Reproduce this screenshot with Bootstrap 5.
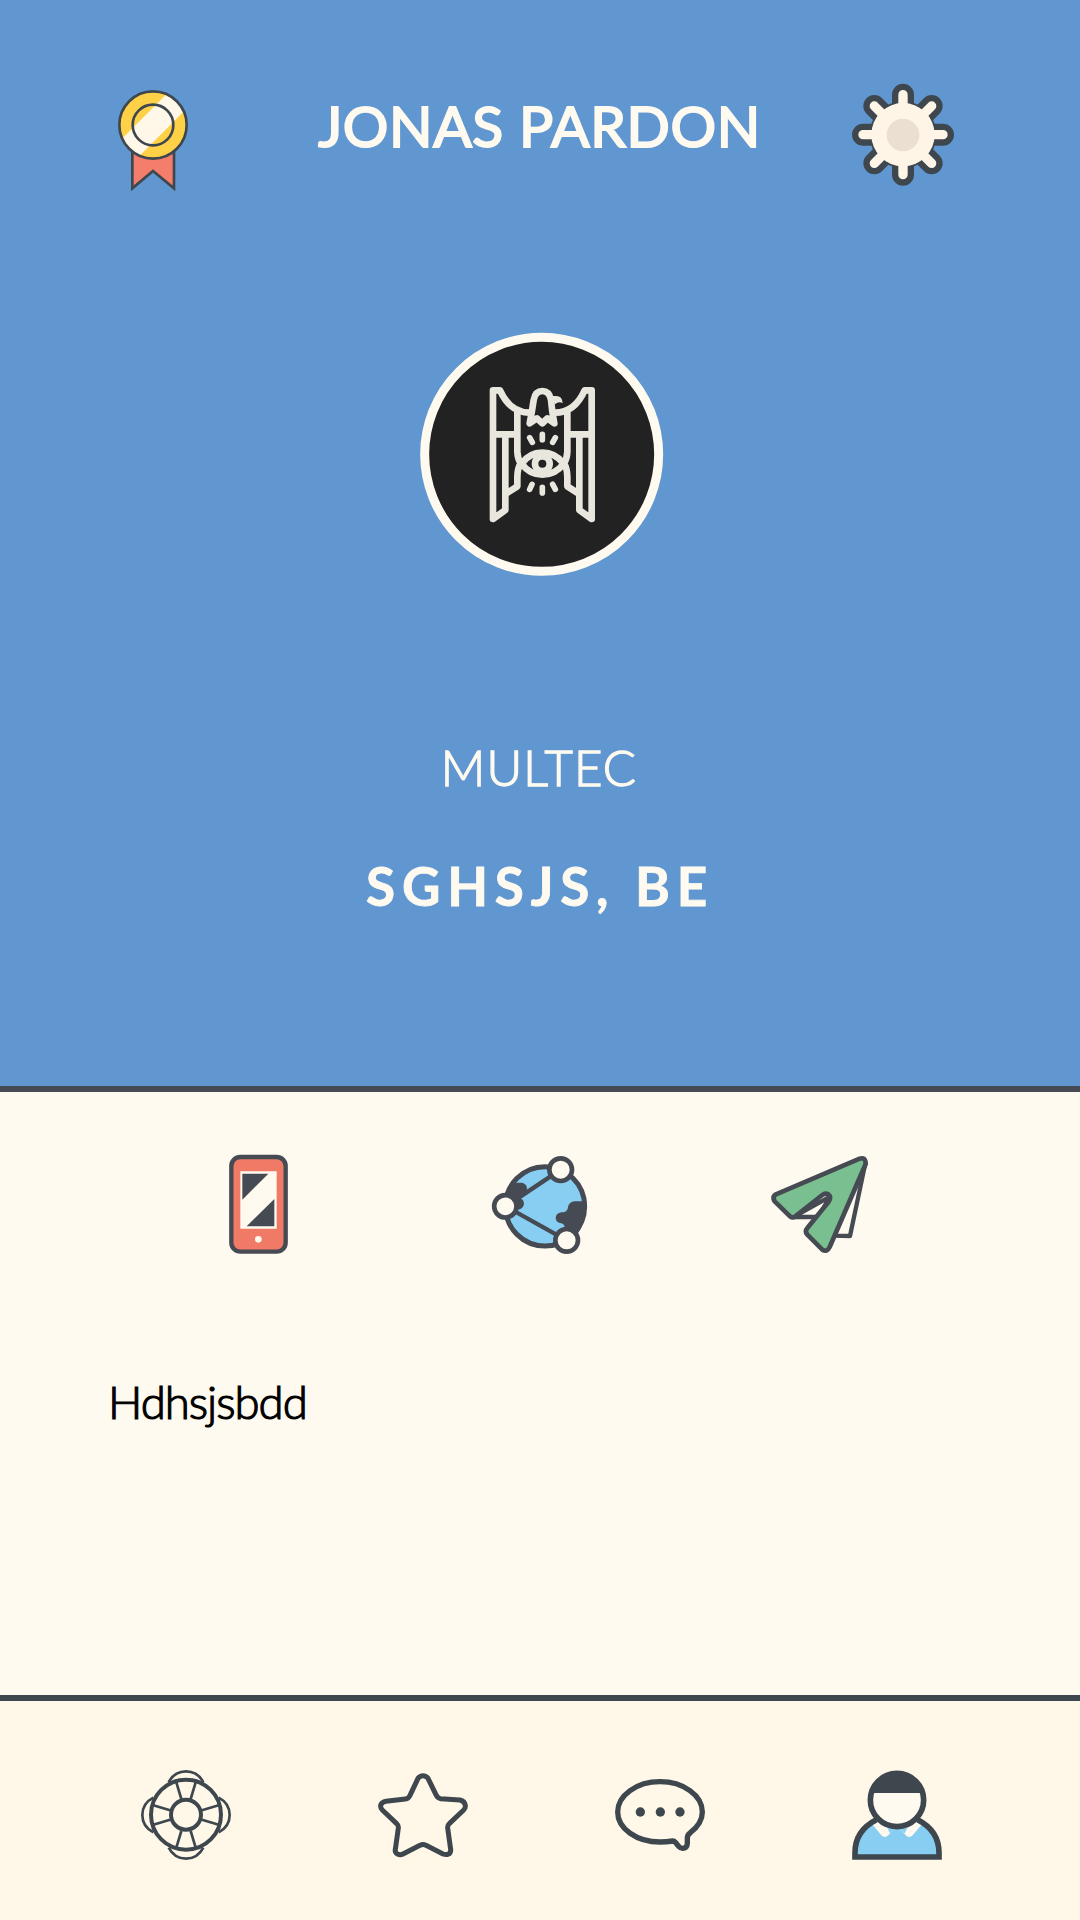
<!DOCTYPE html>
<html lang="en">
<head>
<meta charset="utf-8">
<meta name="viewport" content="width=device-width, initial-scale=1">
<title>Jonas Pardon</title>
<link href="https://cdn.jsdelivr.net/npm/bootstrap@5.3.0/dist/css/bootstrap.min.css" rel="stylesheet">
<style>
  body { font-family: Lato, "Open Sans", sans-serif; background: #fffaf0; color: #000; }
  svg { display: block; flex: none; }
  .screen { width: 1080px; height: 1920px; }
  .profile { height: 1092px; background: #6197d0; color: #fffaf0; border-bottom: 6px solid #464a52; }
  .topbar { padding: 70px 110px 0 100px; }
  .person { font-size: 57px; line-height: 60px; font-weight: 400; letter-spacing: .6px; -webkit-text-stroke: 2px; margin: 25px 0 0 29px; }
  .avatar { margin: 122px 0 0 410px; }
  .study { font-size: 49px; line-height: 60px; font-weight: 300; letter-spacing: 1.2px; -webkit-text-stroke: 1.4px; margin: 151px 2px 0 0; }
  .place { font-size: 53px; line-height: 60px; font-weight: 700; letter-spacing: 6.8px; -webkit-text-stroke: .8px; margin-top: 59px; }
  .about { height: 603px; }
  .links { padding: 48px 200px 0 210px; }
  .bio { font-size: 45.5px; line-height: 60px; font-weight: 300; letter-spacing: -1px; -webkit-text-stroke: 1.2px; margin: 102px 0 0 108px; }
  .tabs { height: 225px; background: #fff7e8; border-top: 6px solid #3f474e; padding: 66px 65px 0 67px; }
</style>
</head>
<body>
<main class="screen d-flex flex-column overflow-hidden">
  <section class="profile">
    <header class="topbar d-flex align-items-start justify-content-between">
      <svg width="110" height="130" viewBox="0 0 330 390" role="img" aria-label="Awards">
        <defs><clipPath id="disc"><circle cx="159" cy="165" r="101"/></clipPath></defs>
        <path d="M97 240V355L159 303L222 355V240Z" fill="#f47d6b" stroke="#3f474e" stroke-width="8"/>
        <circle cx="159" cy="165" r="101" fill="#ffd147"/>
        <path d="M55 217L209 63L264 112L110 266Z" fill="#fff7e8" clip-path="url(#disc)"/>
        <g fill="none" stroke="#3f474e" stroke-width="8"><circle cx="159" cy="165" r="101"/><circle cx="159" cy="165" r="61"/></g>
      </svg>
      <h1 class="person text-nowrap">JONAS PARDON</h1>
      <svg width="130" height="130" viewBox="0 0 390 390" role="img" aria-label="Settings">
        <g stroke-linecap="round">
          <g fill="#3f474e" stroke="#3f474e" stroke-width="66"><circle cx="189" cy="194" r="80" stroke-width="40"/><path d="M189 74V314M69 194H309M103 108L275 280M275 108L103 280"/></g>
          <g fill="#fff5e6" stroke="#fff5e6" stroke-width="28"><circle cx="189" cy="194" r="95" stroke="none"/><path d="M189 74V314M69 194H309M103 108L275 280M275 108L103 280"/></g>
        </g>
        <circle cx="189" cy="195" r="49" fill="#eadfd1"/>
      </svg>
    </header>
    <svg class="avatar" width="264" height="264" viewBox="0 0 792 792" role="img" aria-label="Profile picture">
      <circle cx="395" cy="397" r="351" fill="#222" stroke="#fffaf0" stroke-width="27"/>
      <g fill="none" stroke="#e9e6de" stroke-width="20" stroke-linejoin="round" stroke-linecap="round">
        <g id="wing">
          <path d="M249 205H270Q300 272 359 272M249 205V591L286 564V340M249 337H321M322 268V390Q323 410 332 424Q322 440 322 465V493L288 515"/>
        </g>
        <use href="#wing" transform="matrix(-1 0 0 1 794 0)"/>
        <path d="M359 304Q366 270 371 234Q376 207 397 207Q418 207 423 234Q426 270 433 304L412 289L397 304L381 289Z"/>
        <path d="M335 425Q358 392 397 392Q436 392 461 425Q436 458 397 458Q358 458 335 425Z"/>
        <circle cx="397" cy="425" r="22"/>
        <path d="M397 337V353M359 347L367 361M436 347L428 361M397 496V513M366 487L359 502M428 487L436 502" stroke-width="17"/>
      </g>
      <path d="M424 222H439Q457 222 458 244Q447 236 435 247Z" fill="#e9e6de"/>
    </svg>
    <p class="study text-center">MULTEC</p>
    <p class="place mb-0 text-center">SGHSJS, BE</p>
  </section>

  <section class="about">
    <div class="links d-flex justify-content-between">
      <svg width="100" height="130" viewBox="0 0 300 390" role="img" aria-label="Phone">
        <rect x="64" y="51" width="163" height="284" rx="27" fill="#f07a66" stroke="#464a52" stroke-width="13"/>
        <path d="M91 94H200V266H91Z" fill="#fffaf0"/>
        <path d="M97 101H175L97 179ZM193 177V259H110Z" fill="#464a52"/>
        <circle cx="145" cy="298" r="10" fill="#fffaf0"/>
      </svg>
      <svg width="120" height="130" viewBox="-15 0 360 390" role="img" aria-label="Website">
        <circle cx="195" cy="199" r="119" fill="#87cef2" stroke="#464a52" stroke-width="15"/>
        <path d="M81 166Q91 132 112 128H127Q141 132 141 146Q139 160 124 161Q115 163 117 174Q132 177 132 192Q130 208 112 209H80ZM320 184H283Q265 187 263 206Q260 217 244 217Q227 221 227 234Q228 249 244 250Q257 252 256 280L290 284Q319 251 320 184Z" fill="#464a52"/>
        <path d="M242 89L77 199L260 301" fill="none" stroke="#464a52" stroke-width="13"/>
        <g fill="#fffaf0" stroke="#464a52" stroke-width="14"><circle cx="242" cy="89" r="34"/><circle cx="76" cy="199" r="33.500"/><circle cx="260" cy="301" r="34"/></g>
      </svg>
      <svg width="120" height="130" viewBox="0 0 360 390" role="img" aria-label="Send">
        <g stroke="#464a52" stroke-width="13" stroke-linejoin="round">
          <path d="M100 231H175L210 170ZM220 287L270 288L316 70Z" fill="#fffaf0"/>
          <path d="M46 164L299 56Q317 50 317 72L209 321Q201 338 187 329L142 284Q133 274 142 264L206 185Q215 170 205 163Q196 158 187 165L105 230Q98 235 90 229L44 184Q36 172 46 164Z" fill="#79bf90" stroke-width="14"/>
        </g>
      </svg>
    </div>
    <p class="bio mb-0">Hdhsjsbdd</p>
  </section>

  <nav class="tabs d-flex" aria-label="Main">
    <a class="flex-fill d-flex justify-content-center" href="#" aria-label="Help">
      <svg width="96" height="96" viewBox="24 261 288 288" fill="none" stroke="#3f474e">
        <g stroke-width="8">
          <path id="rope" d="M116 307Q133 274 168 274Q203 274 220 307M139 307L154 357M197 307L182 357"/>
          <use href="#rope" transform="rotate(90 168 405)"/><use href="#rope" transform="rotate(180 168 405)"/><use href="#rope" transform="rotate(270 168 405)"/>
        </g>
        <circle cx="168" cy="404" r="105" stroke-width="12"/><circle cx="168" cy="404" r="45" stroke-width="12"/>
      </svg>
    </a>
    <a class="flex-fill d-flex justify-content-center" href="#" aria-label="Favourites">
      <svg width="96" height="96" viewBox="735 261 288 288">
        <path d="M864 295Q870 287 879 287Q888 287 894 295L919 346Q923 355 932 356L990 360Q1004 363 1006 376Q1007 384 1001 390L958 431Q952 436 953 444L962 508Q963 519 954 523Q947 525 939 522L888 496Q879 491 870 496L819 522Q811 526 802 522Q794 517 796 508L805 444Q806 436 800 431L757 390Q751 384 752 376Q755 366 768 364L826 357Q836 356 840 346Z" fill="none" stroke="#3f474e" stroke-width="15" stroke-linejoin="round"/>
      </svg>
    </a>
    <a class="flex-fill d-flex justify-content-center" href="#" aria-label="Messages">
      <svg width="96" height="96" viewBox="36 51 288 288">
        <path d="M218 273Q200 276 180 276C110 276 53 236 53 186S110 95 180 95S307 136 307 186Q307 220 271 248Q262 254 262 264V281Q261 295 248 295Q241 295 237 290L226 277Q223 273 218 273Z" fill="none" stroke="#3f474e" stroke-width="16" stroke-linejoin="round"/>
        <g fill="#3f474e"><circle cx="121" cy="186" r="14"/><circle cx="181" cy="186" r="14"/><circle cx="240" cy="186" r="14"/></g>
      </svg>
    </a>
    <a class="flex-fill d-flex justify-content-center" href="#" aria-label="Profile">
      <svg width="96" height="96" viewBox="747 51 288 288">
        <path d="M765 321V308C765 248 815 198 891 198S1017 248 1017 308V321Z" fill="#87cef2"/>
        <path d="M812 217L844 256Q854 266 865 256L881 236H902L917 256Q928 266 938 256L971 217L920 190H850Z" fill="#fffaf0"/>
        <path d="M880 238H904L914 250L926 225H858L870 250Z" fill="#87cef2"/>
        <path d="M829 209Q765 242 765 308V321H1017V308Q1017 242 953 209" fill="none" stroke="#3f474e" stroke-width="17"/>
        <circle cx="891" cy="150" r="80" fill="#fffaf0" stroke="#3f474e" stroke-width="17"/>
        <path d="M811 129Q824 69 891 69T971 129Z" fill="#3f474e"/>
      </svg>
    </a>
  </nav>
</main>
<script src="https://cdn.jsdelivr.net/npm/bootstrap@5.3.0/dist/js/bootstrap.bundle.min.js"></script>
</body>
</html>
